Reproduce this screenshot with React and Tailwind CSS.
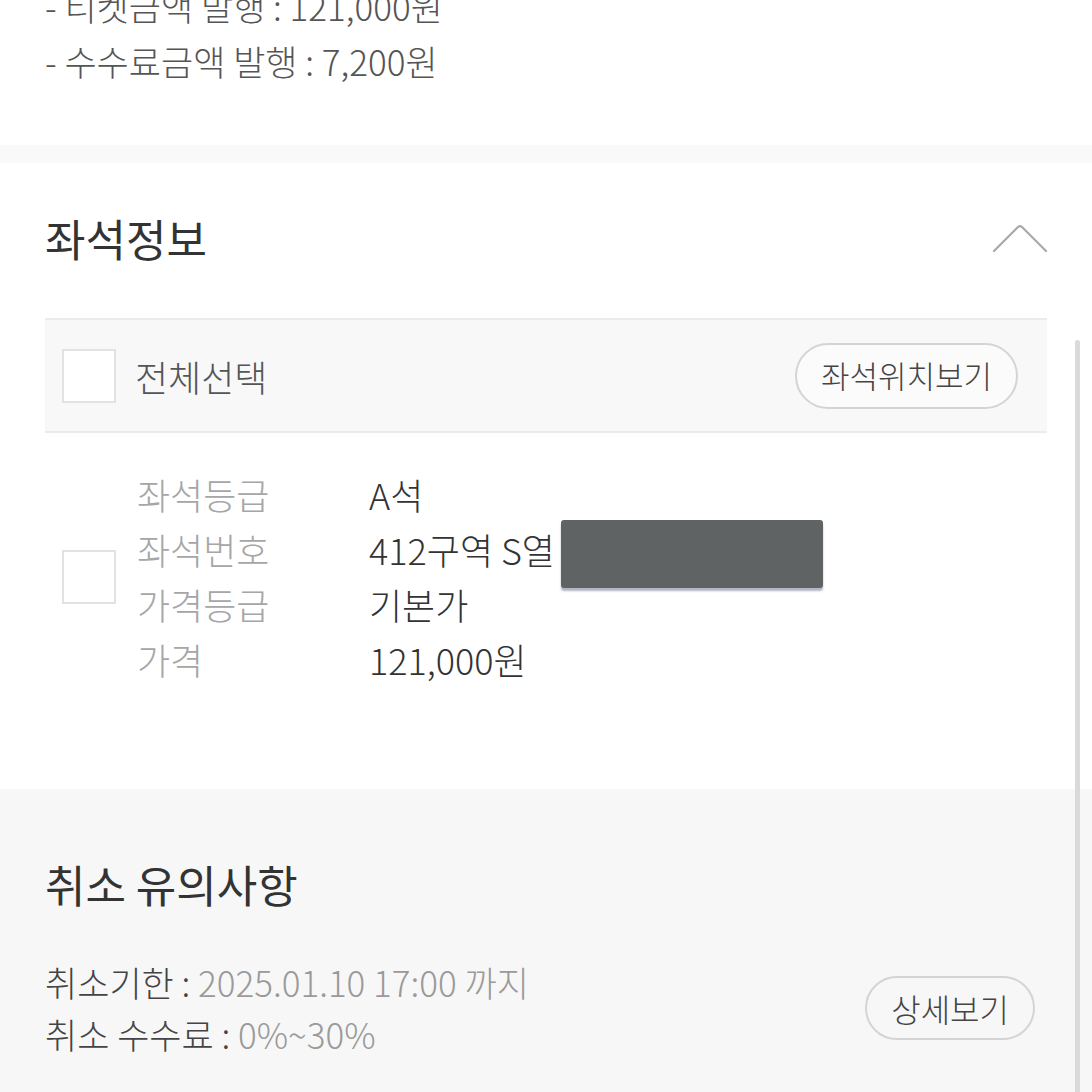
const FONT = { fontFamily: '"Noto Sans CJK KR", "Noto Sans", sans-serif' }

const SEAT_ROWS = [
  ['좌석등급', 'A석'],
  ['좌석번호', '412구역 S열'],
  ['가격등급', '기본가'],
  ['가격', '121,000원'],
]

function Box() {
  return <div className="w-[54px] h-[54px] bg-white border-2 border-[#e2e2e2] flex-shrink-0" />
}

function Chevron() {
  return (
    <svg width="56" height="32" viewBox="0 0 56 32" fill="none" className="-mr-[1px]">
      <path d="M2 29 L26 5 Q28 3 30 5 L54 29" stroke="#a9a9a9" strokeWidth="2.2" strokeLinecap="round" strokeLinejoin="round" />
    </svg>
  )
}

export default function App() {
  return (
    <div className="w-[1092px] h-[1092px] overflow-hidden bg-white relative" style={FONT}>
      {/* Issued amounts */}
      <div className="px-[45px] -mt-[22px] pb-[57px] text-[35px] leading-[55px] text-[#555] font-light">
        <p>- 티켓금액 발행 : 121,000원</p>
        <p>- 수수료금액 발행 : 7,200원</p>
      </div>
      <div className="h-[18px] bg-[#f9f9f9]" />

      {/* Seat info */}
      <div className="px-[45px] pt-[45px] pb-[102px] bg-white">
        <div className="flex items-center justify-between">
          <h2 className="text-[44px] leading-[60px] text-[#333]">좌석정보</h2>
          <Chevron />
        </div>
        <div className="mt-[50px] bg-[#f8f8f8] border-y-2 border-[#ebebeb] h-[115px] flex items-center pl-[17px] pr-[29px]">
          <Box />
          <span className="ml-[19px] text-[36px] text-[#555] font-light">전체선택</span>
          <button className="ml-auto h-[66px] px-[24px] rounded-full border-2 border-[#d4d4d4] bg-white/40 text-[31px] text-[#444] font-light">
            좌석위치보기
          </button>
        </div>
        <div className="flex items-center pl-[17px] pt-[34px]">
          <Box />
          <div className="ml-[21px] grid grid-cols-[232px_auto] text-[36px] leading-[55px] font-light">
            {SEAT_ROWS.map(([label, value]) => (
              <div key={label} className="contents">
                <span className="text-[#a6a6a6]">{label}</span>
                <span className="text-[#333] flex items-center h-[55px]">
                  {value}
                  {label === '좌석번호' && (
                    <span className="ml-[6px] mt-[-3px] mb-[-11px] w-[262px] h-[68px] flex-shrink-0 rounded-[3px] bg-[#606363] shadow-[0_3px_2px_rgba(40,40,80,0.35)]" />
                  )}
                </span>
              </div>
            ))}
          </div>
        </div>
      </div>

      {/* Cancellation notes */}
      <div className="bg-[#f7f7f7] px-[45px] pt-[65px] h-[400px]">
        <h2 className="text-[44px] leading-[60px] text-[#333]">취소 유의사항</h2>
        <div className="mt-[42px] flex items-center justify-between pr-[12px]">
          <div className="text-[35px] leading-[52px] font-light">
            <p className="text-[#444]">취소기한 : <span className="text-[#9a9a9a]">2025.01.10 17:00 까지</span></p>
            <p className="text-[#444]">취소 수수료 : <span className="text-[#9a9a9a]">0%~30%</span></p>
          </div>
          <button className="h-[64px] px-[24px] rounded-full border-2 border-[#d4d4d4] text-[32px] text-[#444] font-light">
            상세보기
          </button>
        </div>
      </div>

      {/* scrollbar */}
      <div className="absolute right-[12px] top-[340px] bottom-0 w-[5px] rounded-t-full bg-[#dadada]" />
    </div>
  )
}
